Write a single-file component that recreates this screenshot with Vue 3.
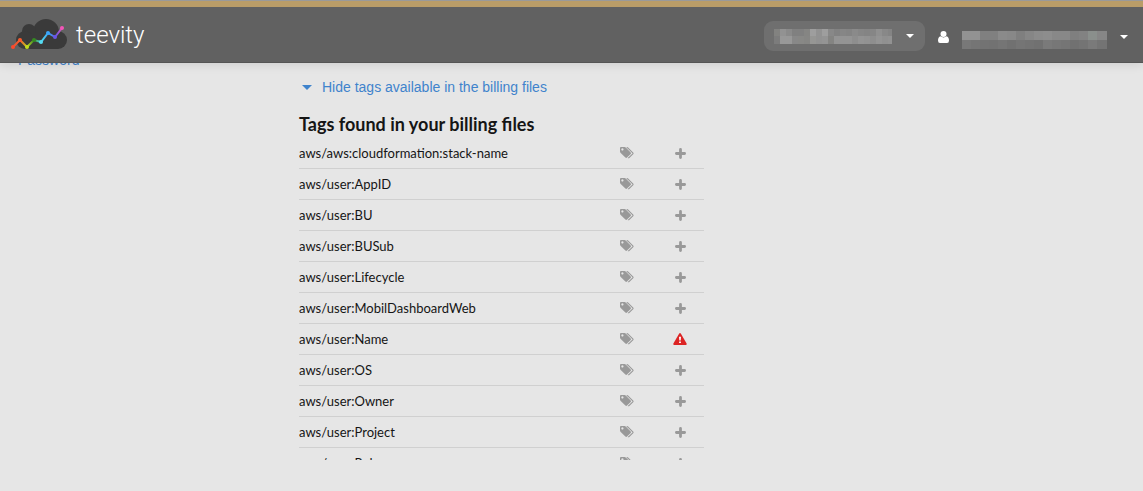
<script setup>
import { ref } from 'vue'

const open = ref(true)
const tags = [
  'aws/aws:cloudformation:stack-name',
  'aws/user:AppID',
  'aws/user:BU',
  'aws/user:BUSub',
  'aws/user:Lifecycle',
  'aws/user:MobilDashboardWeb',
  'aws/user:Name',
  'aws/user:OS',
  'aws/user:Owner',
  'aws/user:Project',
  'aws/user:Role'
]
const warned = 'aws/user:Name'

const accountCells = [
  ['#828280', '#929292', '#8a8a8a', '#808080', '#808080', '#858583', '#9e9e9e', '#929292', '#9e9e9e', '#888888', '#828282', '#868686', '#848484', '#8a8a8a', '#868686', '#848484', '#868686', '#909090', '#888888', '#848484'],
  ['#7c7c7c', '#989898', '#989898', '#888888', '#888886', '#868684', '#969694', '#929292', '#949494', '#848482', '#949494', '#949494', '#949494', '#8e8e8e', '#949494', '#929292', '#8e8e8e', '#949494', '#909090', '#929292']
]
const userCells = [
  ['#929292', '#929292', '#808080', '#808080', '#8a8a8a', '#888888', '#7f7f7f', '#868686', '#8b8b8b', '#8d8d8d', '#888888', '#888888', '#7f7f7f', '#828282', '#8a8f8c', '#868686'],
  ['#787878', '#757575', '#737373', '#727272', '#757575', '#717171', '#757575', '#737373', '#717171', '#7a7a7a', '#777777', '#757575', '#717171', '#747474', '#7a7a7a', '#747474']
]
</script>

<template>
  <div class="page">
    <header class="bar">
      <a class="brand" href="#">
        <svg class="logo" width="56" height="34" viewBox="0 0 56 34" aria-hidden="true">
          <defs>
            <linearGradient id="trend" gradientUnits="userSpaceOnUse" x1="2" y1="0" x2="52" y2="0">
              <stop offset="0" stop-color="#f04e30" />
              <stop offset=".15" stop-color="#f4622c" />
              <stop offset=".29" stop-color="#b9d21e" />
              <stop offset=".42" stop-color="#3c8c28" />
              <stop offset=".56" stop-color="#52dcf0" />
              <stop offset=".72" stop-color="#3aa0f4" />
              <stop offset=".86" stop-color="#6a55e0" />
              <stop offset="1" stop-color="#f055b4" />
            </linearGradient>
          </defs>
          <g fill="#3a3a3a">
            <circle cx="35" cy="14" r="13" />
            <circle cx="18" cy="13" r="7" />
            <circle cx="14" cy="22" r="9" />
            <circle cx="47" cy="22" r="9" />
            <rect x="14" y="16" width="33" height="15" />
          </g>
          <polyline points="2,29 9,22 16,29 23,22 30,24 37,15 44,19 51,10" fill="none" stroke="url(#trend)" stroke-width="2" />
          <g>
            <circle cx="2" cy="29" r="2" fill="#fb4a2c" /><circle cx="9" cy="22" r="2" fill="#fb5a2c" />
            <circle cx="16" cy="29" r="2" fill="#c3dc1e" /><circle cx="23" cy="22" r="2" fill="#358a20" />
            <circle cx="30" cy="24" r="2" fill="#55dcf2" /><circle cx="37" cy="15" r="2" fill="#3aa4fa" />
            <circle cx="44" cy="19" r="2" fill="#6a55e4" /><circle cx="51" cy="10" r="2" fill="#f455b8" />
          </g>
        </svg>
        <span class="name">teevity</span>
      </a>
      <nav class="menus">
        <button class="account" type="button" aria-label="Account">
          <svg width="118" height="15" viewBox="0 0 118 15" shape-rendering="crispEdges" aria-hidden="true">
            <g v-for="(row, r) in accountCells" :key="r">
              <rect v-for="(c, i) in row" :key="i" :x="i * 6" :y="r * 7" width="6" height="8" :fill="c" />
            </g>
          </svg>
          <span class="caret"></span>
        </button>
        <button class="user" type="button" aria-label="User">
          <svg width="11" height="12" viewBox="0 0 11 12" fill="#fff" aria-hidden="true">
            <circle cx="5.500" cy="3" r="3" />
            <path d="M2.500 5.300 Q5.500 7.500 8.500 5.300 Q11 6 11 9.500 Q11 12 9 12 H2 Q0 12 0 9.500 Q0 6 2.500 5.300 Z" />
          </svg>
          <svg class="mask" width="145" height="18" viewBox="0 0 145 18" shape-rendering="crispEdges" aria-hidden="true">
            <g v-for="(row, r) in userCells" :key="r">
              <rect v-for="(c, i) in row" :key="i" :x="i * 9" :y="r * 9" width="10" height="9" :fill="c" />
            </g>
          </svg>
          <span class="caret"></span>
        </button>
      </nav>
    </header>

    <div class="body">
      <aside class="side"><a href="#">Password</a></aside>
      <main class="content">
        <button class="toggle" type="button" :aria-expanded="open" @click="open = !open">
          <span class="caret"></span>Hide tags available in the billing files
        </button>
        <section v-if="open">
          <h2>Tags found in your billing files</h2>
          <div class="scroller">
            <table>
              <tbody>
                <tr v-for="tag in tags" :key="tag">
                  <td>{{ tag }}</td>
                  <td class="icon tagged">
                    <svg width="14" height="12" viewBox="0 0 14 12" aria-hidden="true">
                      <path fill="#999" fill-rule="evenodd" d="M0 1 Q0 0 1 0 H4.500 Q5.300 0 6 .7 L10.700 5.400 Q11.400 6.100 10.700 6.900 L7 10.600 Q6.200 11.300 5.400 10.600 L.7 5.900 Q0 5.200 0 4.400 Z M2.400 1.300 A1.100 1.100 0 1 0 2.410 1.300 Z" />
                      <path fill="none" stroke="#999" stroke-width="1.100" d="M6.700 .5 Q7.300 .5 8 1.200 L12.800 5.800 Q13.300 6.300 12.800 6.900 L9 10.600 Q8.500 11 8 10.600" />
                    </svg>
                  </td>
                  <td class="icon action">
                    <button v-if="tag === warned" type="button" aria-label="Warning">
                      <svg width="14" height="12" viewBox="0 0 14 12" aria-hidden="true">
                        <path fill="#dc2424" d="M6.200 .5 Q7 -.5 7.800 .5 L13.600 10.600 Q14 12 12.800 12 H1.200 Q0 12 .4 10.600 Z" />
                        <path fill="#fff" d="M6 3.800 H8 L7.700 7.600 H6.300 Z M6.100 8.400 H7.900 V10.100 H6.100 Z" />
                      </svg>
                    </button>
                    <button v-else type="button" aria-label="Add tag">
                      <svg width="11" height="11" viewBox="0 0 11 11" aria-hidden="true">
                        <path fill="none" stroke="#999" stroke-width="2.800" stroke-linecap="round" d="M5.500 1.400 V9.600 M1.400 5.500 H9.600" />
                      </svg>
                    </button>
                  </td>
                </tr>
              </tbody>
            </table>
          </div>
        </section>
      </main>
    </div>
  </div>
</template>

<style>
body {
  background: #e6e6e6;
}
</style>

<style scoped>
.page {
  font-family: Lato, sans-serif;
  font-size: 13px;
  color: #151515;
}
button {
  display: flex;
  align-items: center;
  padding: 0;
  border: 0;
  background: none;
  font: inherit;
  color: inherit;
  cursor: pointer;
}
svg {
  display: block;
}
a {
  text-decoration: none;
}
.bar {
  position: sticky;
  top: 0;
  z-index: 1;
  box-sizing: border-box;
  height: 63px;
  display: flex;
  justify-content: space-between;
  padding: 0 15px 0 11px;
  border-bottom: 1px solid #555;
  background: linear-gradient(#9a9a9a 1px, #ba9d68 1px, #ba9d68 7px, #616161 7px);
  box-shadow: 0 1px 10px rgba(0, 0, 0, 0.12);
}
.brand {
  display: flex;
  align-items: center;
  gap: 9px;
  padding-top: 7px;
  color: #fff;
}
.name {
  font: 300 24px/32px Roboto, "Liberation Sans", sans-serif;
}
.menus {
  display: flex;
  align-items: center;
  gap: 13px;
  padding-top: 10px;
}
.account {
  height: 30px;
  padding: 0 11px 0 10px;
  gap: 14px;
  border-radius: 9px;
  background: #6f6f6f;
}
.user {
  gap: 13px;
  margin-top: 2px;
}
.mask {
  margin-top: 6px;
}
.caret {
  border: 4px solid transparent;
  border-top-color: #fff;
  border-bottom: 0;
}
.body {
  display: flex;
  margin-top: -11px;
}
.side {
  flex: 0 0 281px;
  padding-left: 18px;
  font: 14px/16px "Liberation Sans", Arial, sans-serif;
}
.side a,
.toggle {
  color: #3f83cc;
}
.content {
  flex: 0 1 405px;
  padding-top: 27px;
}
.toggle {
  gap: 10px;
  padding-left: 3px;
  font: 14px/16px "Liberation Sans", Arial, sans-serif;
}
.toggle .caret {
  border-width: 5px 5px 0;
  border-top-color: #3f83cc;
}
h2 {
  margin: 17px 0 2px;
  font-size: 18px;
  line-height: 24px;
}
.scroller {
  height: 322px;
  overflow: hidden;
}
table {
  width: 100%;
  border-collapse: collapse;
}
td {
  height: 30px;
  padding: 0;
  border-bottom: 1px solid #d0d0d0;
}
.tagged {
  width: 58px;
}
.action {
  width: 48px;
}
.icon svg,
.icon button {
  margin: 0 auto;
}
</style>
